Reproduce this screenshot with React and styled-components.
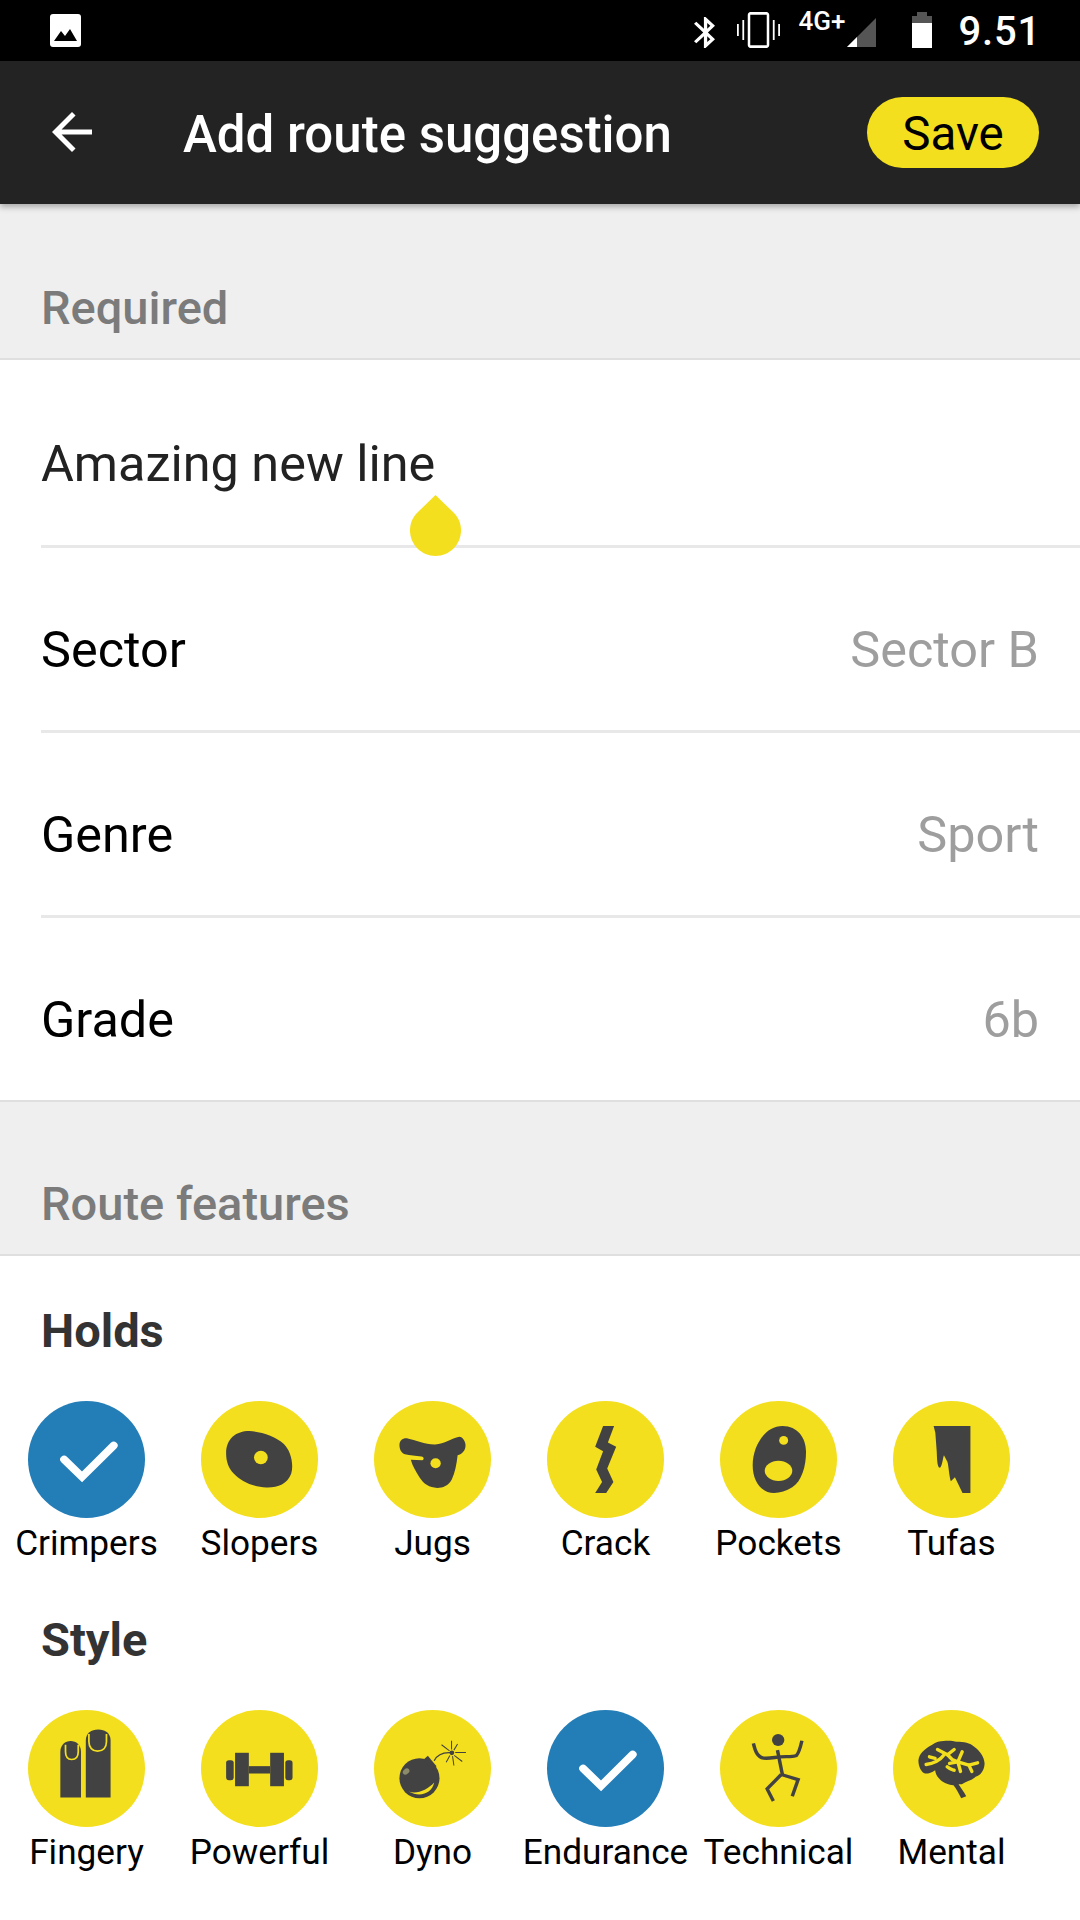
import React from 'react'
import styled, { createGlobalStyle } from 'styled-components'

const GlobalStyle = createGlobalStyle`
  html, body {
    margin: 0;
    padding: 0;
    background: #fff;
    font-family: Roboto, "Liberation Sans", sans-serif;
  }
`

const Screen = styled.div`
  width: 1080px;
  height: 1920px;
  overflow: hidden;
  background: #fff;
`

const StatusBar = styled.div`
  height: 61px;
  background: #000;
  display: flex;
  align-items: flex-start;
  padding: 0 39px 0 50px;
  color: #fff;
`

const StatusLeft = styled.div`
  flex: 1;
  padding-top: 14px;
  svg { display: block; }
`

const StatusItem = styled.div`
  margin-left: ${(p) => p.$gap || 0}px;
  margin-top: ${(p) => p.$top || 0}px;
  display: flex;
  svg { display: block; }
`

const NetworkText = styled.span`
  font-size: 26px;
  line-height: 20px;
  font-weight: 500;
  width: 49px;
  white-space: nowrap;
`

const Clock = styled.span`
  font-size: 40px;
  line-height: 36px;
  font-weight: 500;
  letter-spacing: 0.8px;
`

const AppBar = styled.header`
  position: relative;
  height: 143px;
  background: #232323;
  box-shadow: 0 3px 6px rgba(0, 0, 0, 0.3);
  display: flex;
  align-items: center;
  padding: 0 41px 0 52px;
  color: #fff;
`

const BackButton = styled.div`
  width: 40px;
  height: 40px;
  margin-top: -1px;
  svg { display: block; }
`

const Title = styled.h1`
  flex: 1;
  margin: 4px 0 0 91px;
  font-size: 51px;
  line-height: 60px;
  font-weight: 500;
`

const SaveButton = styled.button`
  width: 172px;
  height: 71px;
  border: 0;
  padding: 2px 0 0;
  border-radius: 36px;
  background: #f3df1e;
  color: #000;
  font-family: inherit;
  font-size: 47.5px;
  font-weight: 400;
`

const SectionHead = styled.div`
  height: ${(p) => p.$height}px;
  box-sizing: border-box;
  background: #efefef;
  border-bottom: 2px solid #dfdfdf;
  display: flex;
  align-items: flex-end;
  padding: 0 41px 25px;
  color: #7b7b7b;
  font-size: 47px;
  line-height: 50px;
  font-weight: 500;
`

const Row = styled.div`
  position: relative;
  height: ${(p) => p.$height || 185}px;
  box-sizing: border-box;
  margin-left: ${(p) => (p.$last ? 0 : 41)}px;
  padding: 21px 41px 0 ${(p) => (p.$last ? 41 : 0)}px;
  border-bottom: ${(p) => (p.$last ? '2px solid #dfdfdf' : '3px solid #e8e8e8')};
  display: flex;
  align-items: center;
  justify-content: space-between;
  font-size: 50.4px;
`

const RowLabel = styled.span`
  color: ${(p) => (p.$input ? '#222' : '#000')};
`

const RowValue = styled.span`
  color: #9e9e9e;
`

const CursorHandle = styled.svg`
  position: absolute;
  left: 369px;
  top: 135px;
`

const FeatureTitle = styled.h2`
  margin: 0;
  padding: ${(p) => p.$top}px 0 0 41px;
  height: ${(p) => p.$height}px;
  box-sizing: border-box;
  font-size: 47px;
  line-height: 52px;
  font-weight: 700;
  color: #333;
`

const FeatureGrid = styled.div`
  display: grid;
  grid-template-columns: repeat(6, 173px);
`

const Feature = styled.div`
  display: flex;
  flex-direction: column;
  align-items: center;
`

const Badge = styled.div`
  width: 117px;
  height: 117px;
  border-radius: 50%;
  background: ${(p) => (p.$checked ? '#237db7' : '#f3df1e')};
  svg { display: block; }
`

const FeatureLabel = styled.span`
  margin-top: 5px;
  font-size: 35.2px;
  line-height: 40px;
  color: #000;
  white-space: nowrap;
`

const DARK = '#424242'
const YELLOW = '#f3df1e'

const Glyph = ({ box = '0 0 340 350', children }) => (
  <svg width="117" height="117" viewBox={box} preserveAspectRatio="none">
    {children}
  </svg>
)

const CheckIcon = () => (
  <Glyph>
    <path d="M105 175L157 227L249 133" fill="none" stroke="#fff" strokeWidth="23" strokeLinecap="round" />
  </Glyph>
)

const SlopersIcon = () => (
  <Glyph>
    <path fill={DARK} d="M73 157C73 112 103 90 140 90C172 91 218 106 240 128C262 150 270 190 262 218C250 250 222 260 190 259C150 257 115 240 95 217C80 201 73 180 73 157Z" />
    <circle cx="174" cy="169" r="20" fill={YELLOW} />
  </Glyph>
)

const JugsIcon = () => (
  <Glyph>
    <path fill={DARK} d="M74 132C74 118 84 110 98 112C120 116 150 131 178 130C205 129 225 112 248 107C258 107 266 122 266 132C266 148 256 158 243 162C240 190 235 215 226 235C216 254 200 260 184 260C160 258 146 250 132 228C122 212 112 195 107 176L140 177C146 176 146 167 138 166C120 164 105 162 90 159C80 155 74 145 74 132Z" />
    <ellipse cx="179" cy="186" rx="15" ry="15" fill={YELLOW} />
  </Glyph>
)

const CrackIcon = () => (
  <Glyph>
    <path fill={DARK} d="M163 75H195L177 124L201 137L175 202L193 242L172 275H140L160 242L143 205L163 150L140 137Z" />
  </Glyph>
)

const PocketsIcon = () => (
  <Glyph>
    <path fill={DARK} d="M182 75C225 75 250 110 250 152C250 195 238 240 210 258C192 270 175 275 157 275C120 275 95 240 95 192C95 135 130 75 182 75Z" />
    <circle cx="185" cy="118" r="13" fill={YELLOW} />
    <ellipse cx="170" cy="209" rx="40" ry="30" fill={YELLOW} />
  </Glyph>
)

const TufasIcon = () => (
  <Glyph>
    <path fill={DARK} d="M118 75H225V275H202L180 228L168 240C163 225 162 195 158 182L148 162C144 175 142 200 135 200C128 195 128 170 127 150L123 95Z" />
  </Glyph>
)

const FingeryIcon = () => (
  <Glyph>
    <path fill={DARK} d="M94 262V125C94 105 108 93 124 93C140 93 154 105 154 125V262Z" />
    <path fill={DARK} d="M168 262V90C168 70 184 58 204 58C224 58 240 70 240 90V262Z" />
    <path fill="none" stroke={YELLOW} strokeWidth="5" d="M109 104V125C109 140 116 148 127 148C138 148 146 140 146 125V104" />
    <path fill="none" stroke={YELLOW} strokeWidth="5" d="M177 72V95C177 112 187 123 202 123C218 123 228 112 228 95V72" />
  </Glyph>
)

const PowerfulIcon = () => (
  <Glyph>
    <rect x="73" y="150" width="22" height="60" rx="8" fill={DARK} />
    <rect x="99" y="128" width="40" height="100" fill={DARK} />
    <rect x="139" y="168" width="62" height="22" fill={DARK} />
    <rect x="201" y="128" width="40" height="100" fill={DARK} />
    <rect x="245" y="150" width="21" height="60" rx="8" fill={DARK} />
  </Glyph>
)

const DynoIcon = () => (
  <Glyph box="6 0 350 350">
    <circle cx="142" cy="204" r="60" fill={DARK} />
    <path fill={DARK} d="M152 150L167 137L193 168L180 180Z" />
    <path fill="none" stroke={DARK} strokeWidth="4" d="M186 152C196 132 214 126 238 128" />
    <circle cx="239" cy="128" r="7" fill={DARK} />
    <g stroke={DARK} strokeWidth="3" fill="none">
      <path d="M238 92V118M256 102L245 120M281 127H249M270 154L246 136M245 166L241 138M222 156L233 136M208 104L232 122" />
    </g>
    <ellipse cx="102" cy="184" rx="11" ry="8" fill="#8b8b6a" transform="rotate(-40 102 184)" />
    <path fill={YELLOW} d="M110 244C135 252 165 240 186 217C180 248 145 264 110 244Z" />
  </Glyph>
)

const TechnicalIcon = () => (
  <Glyph>
    <circle cx="169" cy="90" r="18" fill={DARK} />
    <g fill="none" stroke={DARK} strokeWidth="10">
      <path d="M167 120L182 197" />
      <path d="M97 100C102 122 108 141 127 144C145 146 160 141 175 140C195 139 212 141 222 136C230 128 234 110 238 92" />
      <path d="M178 193L137 236L155 272" />
      <path d="M178 193L227 208L210 258" />
    </g>
  </Glyph>
)

const MentalIcon = () => (
  <Glyph box="9 0 350 350">
    <path fill={DARK} d="M85 150C88 130 102 118 125 105C138 95 150 93 160 93C175 90 190 93 200 95C220 95 240 98 252 110C268 122 282 140 283 160C282 180 272 195 256 200C245 212 228 212 215 222L205 222C214 235 222 246 228 258L213 264C206 250 198 235 190 225C172 224 155 215 147 205C140 197 136 190 135 180C125 188 112 191 105 190C94 186 85 170 85 150Z" />
    <g fill="none" stroke={YELLOW} strokeWidth="10" strokeLinecap="round" strokeLinejoin="round">
      <path d="M108 163C130 160 150 150 162 134" />
      <path d="M118 140L135 145" />
      <path d="M142 118L172 134L192 118" />
      <path d="M172 134L186 148L203 155" />
      <path d="M216 125L203 155L211 184" />
      <path d="M171 170C180 178 186 178 192 180" />
      <path d="M178 160L203 155L236 165L245 184" />
      <path d="M236 165L262 158" />
    </g>
  </Glyph>
)

const holds = [
  { name: 'Crimpers', checked: true },
  { name: 'Slopers', icon: <SlopersIcon /> },
  { name: 'Jugs', icon: <JugsIcon /> },
  { name: 'Crack', icon: <CrackIcon /> },
  { name: 'Pockets', icon: <PocketsIcon /> },
  { name: 'Tufas', icon: <TufasIcon /> },
]

const styles = [
  { name: 'Fingery', icon: <FingeryIcon /> },
  { name: 'Powerful', icon: <PowerfulIcon /> },
  { name: 'Dyno', icon: <DynoIcon /> },
  { name: 'Endurance', checked: true },
  { name: 'Technical', icon: <TechnicalIcon /> },
  { name: 'Mental', icon: <MentalIcon /> },
]

const Features = ({ items }) => (
  <FeatureGrid>
    {items.map((item) => (
      <Feature key={item.name}>
        <Badge $checked={item.checked}>{item.checked ? <CheckIcon /> : item.icon}</Badge>
        <FeatureLabel>{item.name}</FeatureLabel>
      </Feature>
    ))}
  </FeatureGrid>
)

export default function App() {
  return (
    <Screen>
      <GlobalStyle />
      <StatusBar>
        <StatusLeft>
          <svg width="31" height="33" viewBox="0 0 31 33">
            <rect width="31" height="33" rx="3" fill="#fff" />
            <path d="M4 27L11 17L15 22L20 15L27 27Z" fill="#000" />
          </svg>
        </StatusLeft>
        <StatusItem $top={17}>
          <svg width="21" height="31" viewBox="5 2 12.71 20" preserveAspectRatio="none">
            <path fill="#fff" d="M17.71 7.71L12 2h-1v7.59L6.41 5 5 6.41 10.59 12 5 17.59 6.41 19 11 14.41V22h1l5.71-5.71-4.3-4.29 4.3-4.29zM13 5.83l1.88 1.88L13 9.59V5.83zm1.88 10.46L13 18.17v-3.76l1.88 1.88z" />
          </svg>
        </StatusItem>
        <StatusItem $gap={22} $top={12}>
          <svg width="43" height="36" viewBox="0 3 24 18" preserveAspectRatio="none">
            <path fill="#fff" d="M0 15h1V9H0v6zm3 2h1V7H3v10zm20-8v6h1V9h-1zm-3 8h1V7h-1v10zM16.5 3h-9C6.67 3 6 3.67 6 4.5v15c0 .83.67 1.5 1.5 1.5h9c.83 0 1.5-.67 1.5-1.5v-15c0-.83-.67-1.5-1.5-1.5zM16.6 19.6H7.400V4.400h9.200v15.200z" />
          </svg>
        </StatusItem>
        <StatusItem $gap={18} $top={11}>
          <NetworkText>4G+</NetworkText>
        </StatusItem>
        <StatusItem $top={18}>
          <svg width="29" height="29" viewBox="0 0 29 29">
            <path d="M0 29L29 0V29Z" fill="#555" />
            <path d="M0 29L10 19V29Z" fill="#fff" />
          </svg>
        </StatusItem>
        <StatusItem $gap={36} $top={12}>
          <svg width="20" height="36" viewBox="0 0 20 36">
            <path d="M5 0H15V4H20V36H0V4H5Z" fill="#555" />
            <rect y="11" width="20" height="25" fill="#fff" />
          </svg>
        </StatusItem>
        <StatusItem $gap={26} $top={14}>
          <Clock>9.51</Clock>
        </StatusItem>
      </StatusBar>

      <AppBar>
        <BackButton>
          <svg width="40" height="40" viewBox="4 4 16 16">
            <path fill="#fff" d="M20 11H7.83l5.59-5.59L12 4l-8 8 8 8 1.41-1.41L7.83 13H20v-2z" />
          </svg>
        </BackButton>
        <Title>Add route suggestion</Title>
        <SaveButton>Save</SaveButton>
      </AppBar>

      <SectionHead $height={156}>Required</SectionHead>
      <Row $height={188}>
        <RowLabel $input>Amazing new line</RowLabel>
        <CursorHandle width="51" height="61" viewBox="0 0 51 61">
          <path fill={YELLOW} d="M25.5 0L44 18C48.5 22.5 51 28.500 51 35.500C51 49.500 39.500 61 25.500 61C11.500 61 0 49.500 0 35.500C0 28.500 2.500 22.500 7 18Z" />
        </CursorHandle>
      </Row>
      <Row>
        <RowLabel>Sector</RowLabel>
        <RowValue>Sector B</RowValue>
      </Row>
      <Row>
        <RowLabel>Genre</RowLabel>
        <RowValue>Sport</RowValue>
      </Row>
      <Row $last $height={184}>
        <RowLabel>Grade</RowLabel>
        <RowValue>6b</RowValue>
      </Row>

      <SectionHead $height={154}>Route features</SectionHead>
      <FeatureTitle $top={49} $height={145}>Holds</FeatureTitle>
      <Features items={holds} />
      <FeatureTitle $top={51} $height={147}>Style</FeatureTitle>
      <Features items={styles} />
    </Screen>
  )
}
